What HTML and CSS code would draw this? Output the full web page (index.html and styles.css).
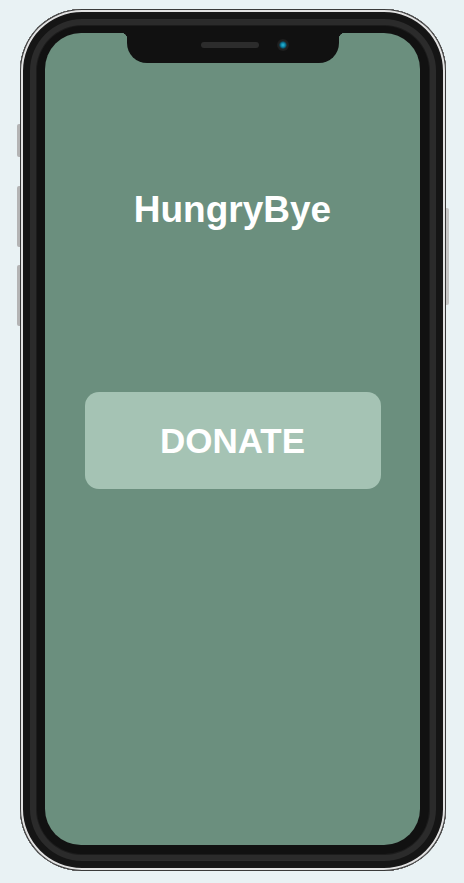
FILE: index.html
```html
<!DOCTYPE html>
<html lang="en">
<head>
<meta charset="utf-8">
<title>HungryBye</title>
<link rel="stylesheet" href="styles.css">
</head>
<body>
  <div class="stage">
    <div class="phone">
      <span class="side-btn side-left btn-mute"></span>
      <span class="side-btn side-left btn-vol-up"></span>
      <span class="side-btn side-left btn-vol-down"></span>
      <span class="side-btn side-right btn-power"></span>
      <div class="screen">
        <div class="notch">
          <span class="speaker"></span>
          <span class="camera"></span>
        </div>
        <main class="app">
          <h1 class="title">HungryBye</h1>
          <button class="donate" type="button">DONATE</button>
        </main>
      </div>
    </div>
  </div>
</body>
</html>
```

FILE: styles.css
```css
html, body {
  margin: 0;
  padding: 0;
  background: #e9f2f4;
  height: 100%;
}

.stage {
  padding: 9px 0 0 20px;
}

.phone {
  position: relative;
  width: 426px;
  height: 862px;
  box-sizing: border-box;
  padding: 24px 26px 26px 25px;
  border-radius: 62px;
  background: #111;
  box-shadow:
    inset 0 0 0 1px #3a3a3a,
    inset 0 0 0 3px #e2e2e2,
    inset 0 0 0 5px #161616,
    inset 0 0 0 10px #151515,
    inset 0 0 0 16px #2b2b2b,
    inset 0 0 0 17px #1c1c1c;
}

.side-btn {
  position: absolute;
  width: 3px;
  background: #b4b4b4;
}
.side-left { left: -3px; border-radius: 2px 0 0 2px; }
.side-right { right: -3px; border-radius: 0 2px 2px 0; background: #c4c4c4; }
.btn-mute { top: 115px; height: 33px; }
.btn-vol-up { top: 177px; height: 61px; }
.btn-vol-down { top: 256px; height: 61px; }
.btn-power { top: 199px; height: 97px; }

.screen {
  position: relative;
  width: 375px;
  height: 812px;
  border-radius: 36px;
  background: #6b8f7e;
  overflow: hidden;
}

.notch {
  position: absolute;
  top: 0;
  left: 82px;
  width: 212px;
  height: 30px;
  background: #111;
  border-radius: 0 0 20px 20px;
}
.notch::before,
.notch::after {
  content: "";
  position: absolute;
  top: 0;
  width: 6px;
  height: 6px;
}
.notch::before {
  left: -6px;
  background: radial-gradient(circle at 0 100%, transparent 6px, #111 6.5px);
}
.notch::after {
  right: -6px;
  background: radial-gradient(circle at 100% 100%, transparent 6px, #111 6.5px);
}

.speaker {
  position: absolute;
  left: 74px;
  top: 9px;
  width: 58px;
  height: 6px;
  border-radius: 3px;
  background: #2c2c2c;
}

.camera {
  position: absolute;
  left: 150px;
  top: 6px;
  width: 12px;
  height: 12px;
  border-radius: 50%;
  background: radial-gradient(circle, #2bb8d8 0, #0d86a8 2px, #0b4a60 3.3px, #232323 4px, #1c1c1c 6px);
}

.app {
  display: flex;
  flex-direction: column;
  align-items: center;
  padding-top: 158px;
}

.title {
  margin: 0;
  font-family: "Liberation Sans", Arial, sans-serif;
  font-weight: 700;
  font-size: 37px;
  line-height: 1;
  color: #fff;
}

.donate {
  margin-top: 164px;
  width: 296px;
  height: 97px;
  border: none;
  border-radius: 14px;
  background: #a5c3b4;
  color: #fff;
  font-family: "Liberation Sans", Arial, sans-serif;
  font-weight: 700;
  font-size: 35px;
  padding: 0;
  cursor: pointer;
}
```
